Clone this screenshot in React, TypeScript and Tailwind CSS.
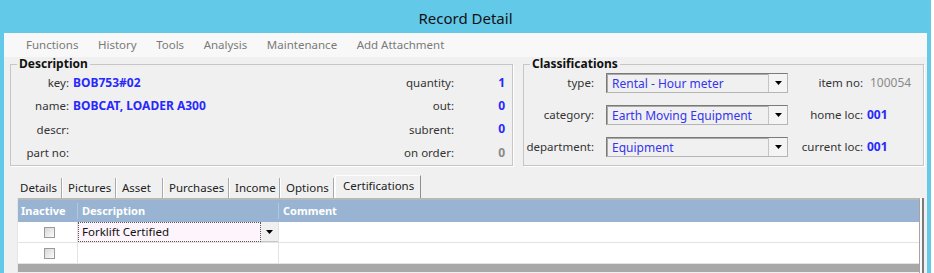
import React from 'react';

const Caret = () => (
  <svg width="7" height="4" viewBox="0 0 7 4">
    <path d="M0 0h7L3.5 4z" fill="#000" />
  </svg>
);

// combo box like the old winforms dropdown
const Combo = ({ value }: { value: string }) => (
  <div className="flex h-[20px] w-[182px] border border-[#7a7a7a] border-r-[#b5b5b5] border-b-[#b5b5b5] bg-[#f0f0f0] shadow-[inset_1px_1px_0_#a8a8a8]">
    <div className="flex-1 pl-[5px] text-[12px] leading-[19px] text-[#3535ee]">{value}</div>
    <div className="flex w-[19px] items-center justify-center border-l border-[#c4c4c4] bg-[#f4f4f4]">
      <Caret />
    </div>
  </div>
);

const Checkbox = () => (
  <div className="h-[11px] w-[11px] border border-[#9a9a9a] bg-gradient-to-br from-[#d8d8d8] to-[#fbfbfb]" />
);

const menu = ['Functions', 'History', 'Tools', 'Analysis', 'Maintenance', 'Add Attachment'];

const descRows: [string, string, string, string, boolean][] = [
  ['key:', 'BOB753#02', 'quantity:', '1', true],
  ['name:', 'BOBCAT, LOADER A300', 'out:', '0', true],
  ['descr:', '', 'subrent:', '0', true],
  ['part no:', '', 'on order:', '0', false],
];

const classRows = [
  { label: 'type:', value: 'Rental - Hour meter', right: 'item no:', rightValue: '100054', muted: true },
  { label: 'category:', value: 'Earth Moving Equipment', right: 'home loc:', rightValue: '001', muted: false },
  { label: 'department:', value: 'Equipment', right: 'current loc:', rightValue: '001', muted: false },
];

const tabs = [
  { name: 'Details', w: 'w-[48px]' },
  { name: 'Pictures', w: 'w-[54px]' },
  { name: 'Asset', w: 'w-[47px]' },
  { name: 'Purchases', w: 'w-[66px]' },
  { name: 'Income', w: 'w-[51px]' },
  { name: 'Options', w: 'w-[54px]' },
];

export default function App() {
  return (
    <div className="h-[273px] w-[934px] overflow-hidden bg-white font-['Segoe_UI','Noto_Sans',sans-serif] text-[11.5px] text-[#333]">
      <div className="flex h-full w-[931px] flex-col bg-[#62c9e9] pl-[4px] pr-[4px]">
        {/* Title bar */}
        <div className="-ml-[4px] -mr-[4px] flex h-[33px] shrink-0 items-center justify-center pt-[4px] text-[15px] text-[#111]">
          Record Detail
        </div>

        <div className="flex flex-1 flex-col bg-[#f0f0f0]">
          {/* Menu */}
          <div className="flex h-[24px] items-center gap-[19.5px] bg-[#f8f8f8] pl-[22px] text-[11.5px] text-[#7a7a7a]">
            {menu.map((m) => (
              <span key={m}>{m}</span>
            ))}
          </div>

          <div className="flex gap-[10px] pl-[6px]">
            {/* Description */}
            <fieldset className="h-[109px] w-[503px] border border-[#c6c6c6] shadow-[1px_1px_0_#fff]">
              <legend className="ml-[6px] px-[2px] text-[12px] leading-[14px] font-bold text-[#111]">Description</legend>
              <div className="flex flex-col">
                {descRows.map(([l, v, rl, rv, blue]) => (
                  <div key={l} className="flex h-[23.3px] items-center">
                    <span className="w-[58px] text-right">{l}</span>
                    <span className="ml-[4px] flex-1 text-[12px] font-bold text-[#2828ff]">{v}</span>
                    <span className="text-right">{rl}</span>
                    <span
                      className={`w-[58px] pr-[7px] text-right text-[12px] font-bold ${blue ? 'text-[#2828ff]' : 'text-[#8a8a8a]'}`}
                    >
                      {rv}
                    </span>
                  </div>
                ))}
              </div>
            </fieldset>

            {/* Classifications */}
            <fieldset className="h-[109px] w-[401px] border border-[#c6c6c6] shadow-[1px_1px_0_#fff]">
              <legend className="ml-[6px] px-[2px] text-[12px] leading-[14px] font-bold text-[#111]">Classifications</legend>
              <div className="flex flex-col gap-[12px] pt-[2px]">
                {classRows.map((r) => (
                  <div key={r.label} className="flex h-[20px] items-center">
                    <span className="w-[70px] text-right">{r.label}</span>
                    <div className="ml-[12px]">
                      <Combo value={r.value} />
                    </div>
                    <span className="w-[75px] text-right">{r.right}</span>
                    {r.muted ? (
                      <span className="ml-[7px] text-[12px] text-[#8a8a8a]">{r.rightValue}</span>
                    ) : (
                      <span className="ml-[4px] text-[12px] font-bold text-[#2828ff]">{r.rightValue}</span>
                    )}
                  </div>
                ))}
              </div>
            </fieldset>
          </div>

          {/* Tabs */}
          <div className="mt-[9px] flex h-[23px] items-end pl-[10px] text-[#222]">
            {tabs.map((t) => (
              <div
                key={t.name}
                className={`${t.w} flex h-[20px] items-center border-r border-[#a9a9a9] pl-[6px] shadow-[1px_0_0_#fff]`}
              >
                {t.name}
              </div>
            ))}
            <div className="ml-[1px] flex h-[23px] w-[86px] items-center border-l border-t border-r border-[#fdfdfd] border-r-[#8f8f8f] pb-[2px] pl-[7px]">
              Certifications
            </div>
          </div>

          {/* Grid */}
          <div className="ml-[13px] flex w-[907px] flex-1 border-l border-[#e6e6e6]">
            <div className="flex flex-1 flex-col border-r border-t-2 border-[#a4a4a4] border-t-[#b8b8b8]">
              <div className="flex h-[22px] items-center bg-[#98b4d2] text-[11px] font-bold text-white">
                <div className="w-[60px] border-r border-[#b3c7de] pl-[3px]">Inactive</div>
                <div className="w-[201px] border-r border-[#b3c7de] pl-[4px]">Description</div>
                <div className="flex-1 pl-[4px]">Comment</div>
              </div>
              <div className="flex h-[21px] border-b border-[#e3e3e3] bg-white">
                <div className="flex w-[60px] items-center justify-center border-r border-[#e3e3e3] pl-[4px]">
                  <Checkbox />
                </div>
                <div className="flex w-[201px] border-r border-[#e3e3e3]">
                  <div className="flex flex-1 items-center border border-dotted border-[#555] bg-[#fdf5fb] pl-[3px] text-[#111]">
                    Forklift Certified
                  </div>
                  <div className="flex w-[17px] items-center justify-center border-b border-[#c8c8c8] bg-[#f0f0f0]">
                    <Caret />
                  </div>
                </div>
                <div className="flex-1" />
              </div>
              <div className="flex h-[21px] border-b border-[#e3e3e3] bg-white">
                <div className="flex w-[60px] items-center justify-center border-r border-[#e3e3e3] pl-[4px]">
                  <Checkbox />
                </div>
                <div className="w-[201px] border-r border-[#e3e3e3]" />
                <div className="flex-1" />
              </div>
              <div className="h-[8px] bg-[#a8a8a8]" />
            </div>
            <div className="w-[2px] bg-[#fafafa]" />
            <div className="w-[2px] bg-[#7a7a7a]" />
          </div>
        </div>
      </div>
    </div>
  );
}
